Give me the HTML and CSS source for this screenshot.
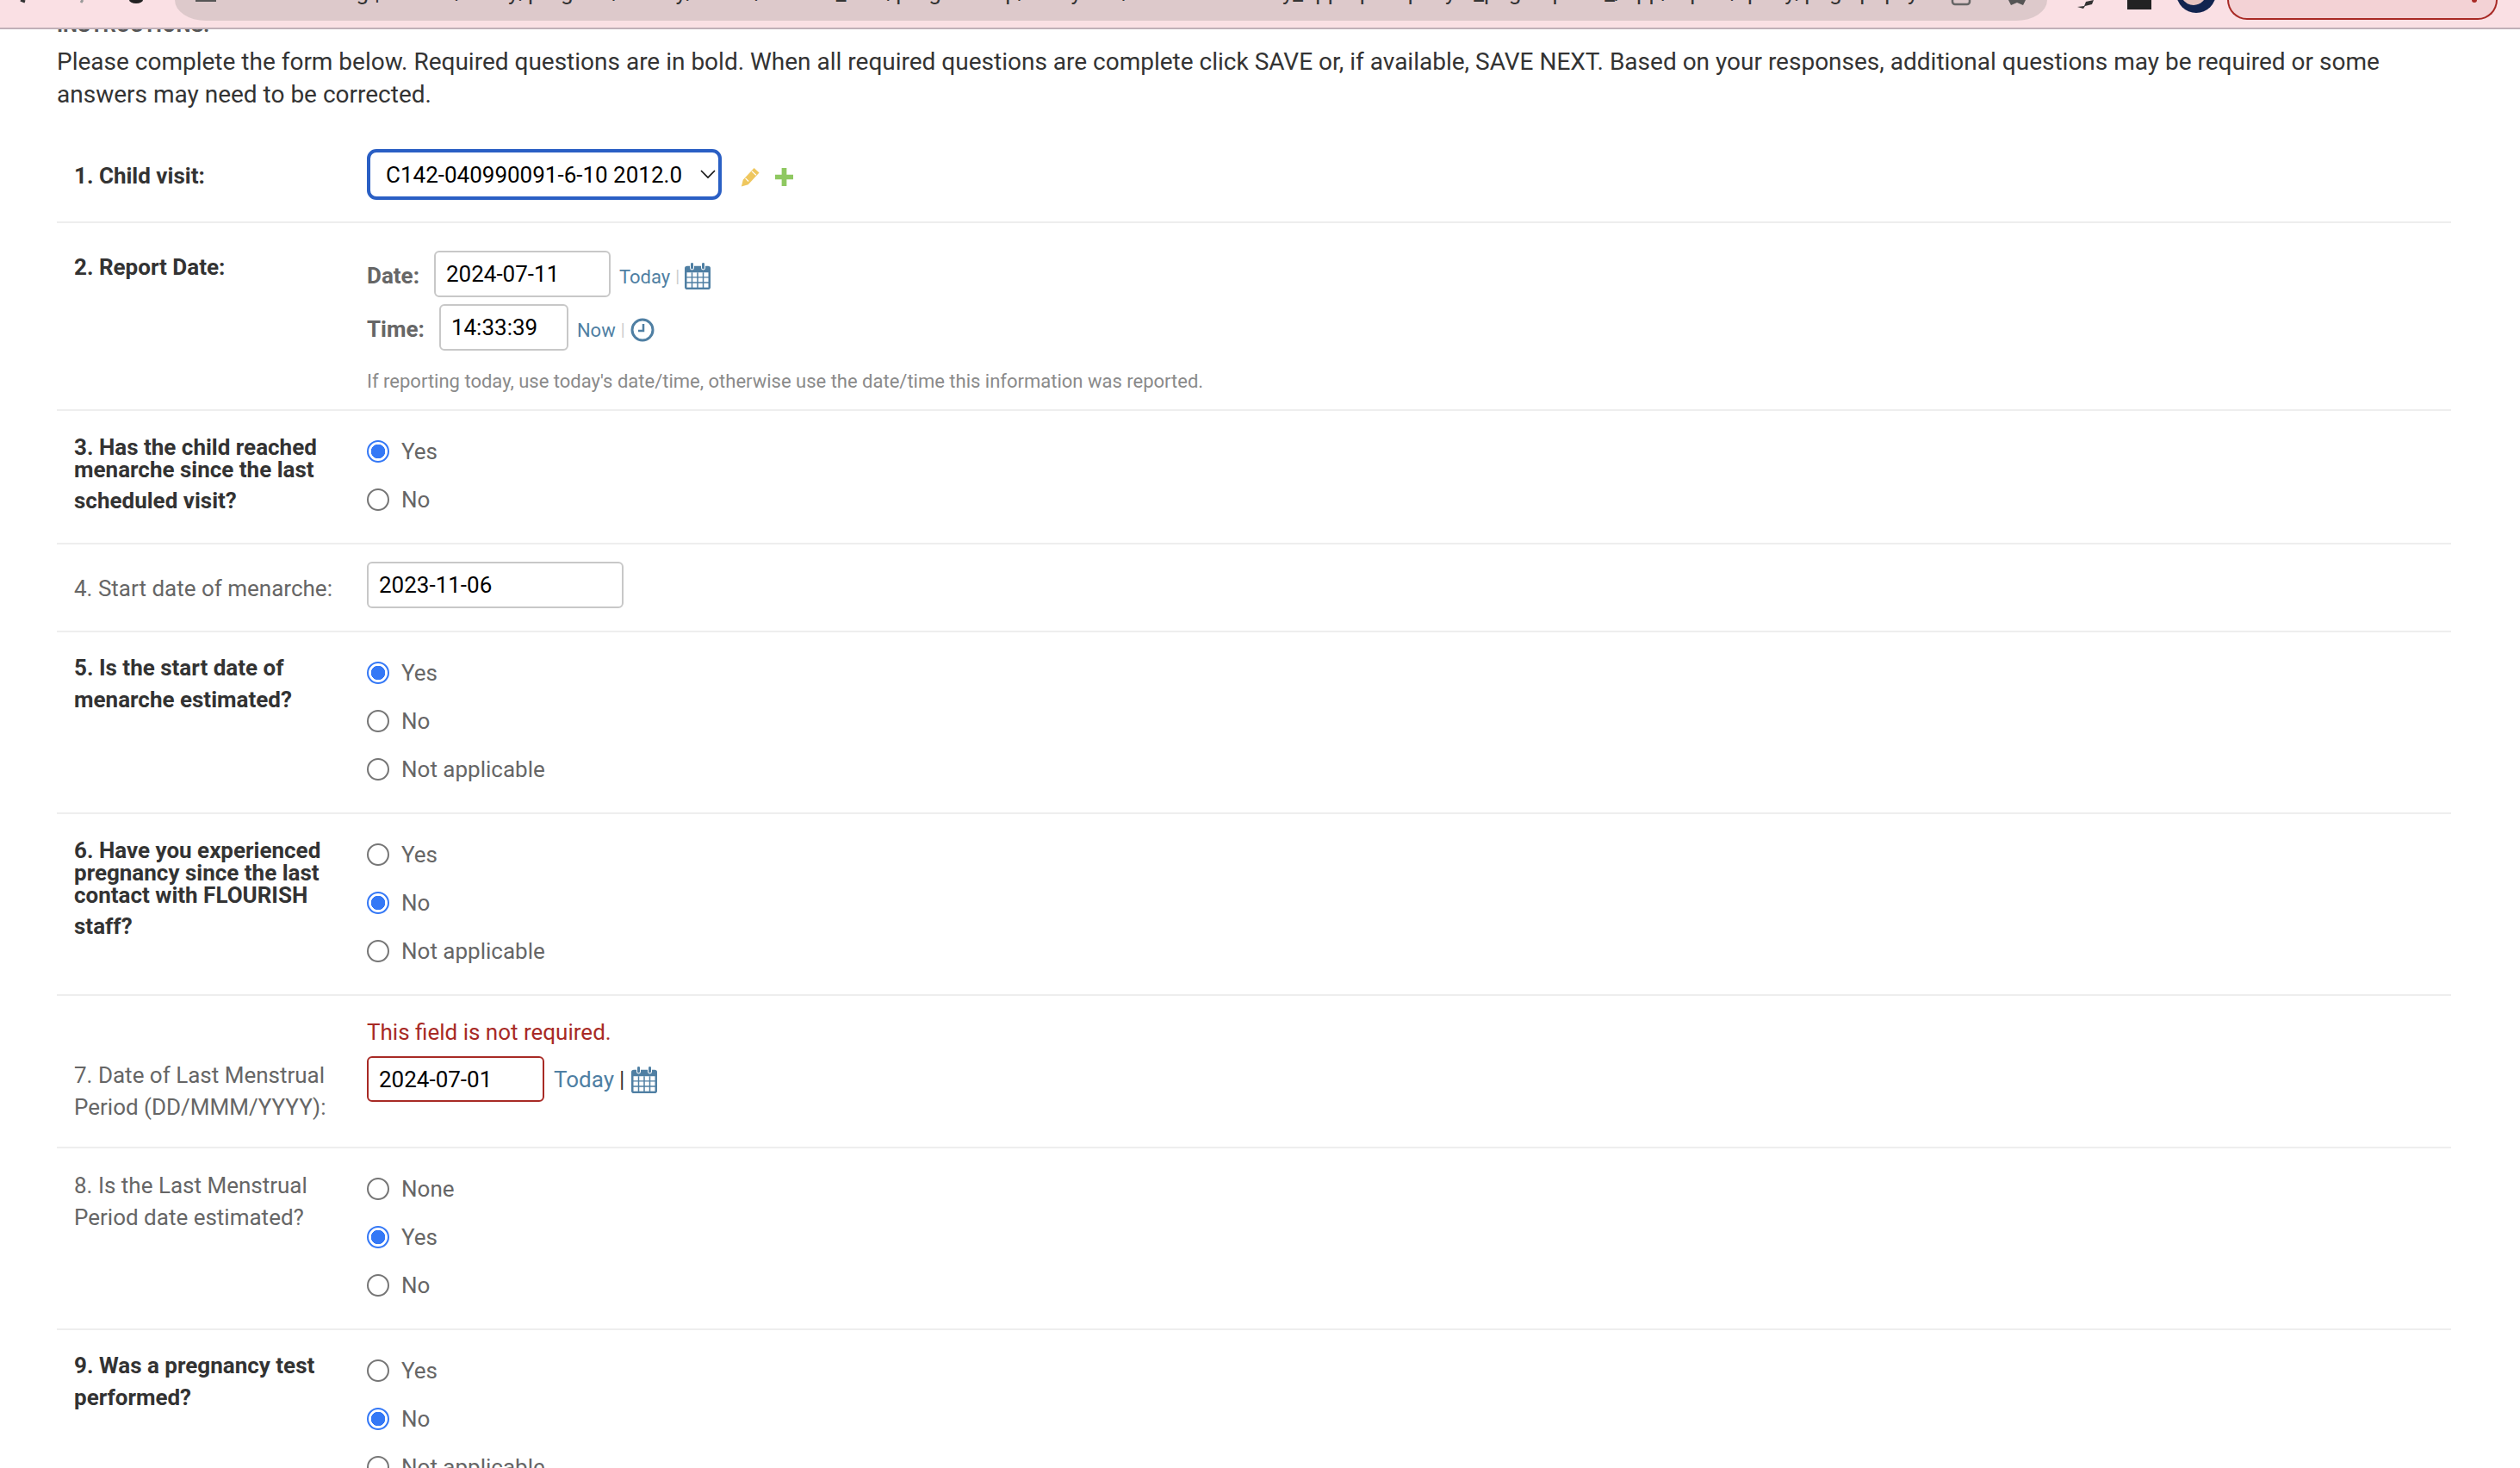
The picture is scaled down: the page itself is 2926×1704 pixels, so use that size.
FILE: index.html
```html
<!DOCTYPE html>
<html lang="en">
<head>
<meta charset="utf-8">
<title>Form</title>
<link rel="stylesheet" href="styles.css">
</head>
<body>
<header class="chrome">
  <div class="nav">
    <svg class="nav-icons" width="180" height="12" viewBox="0 0 180 12"><path d="M24 0l5 2" stroke="#333" stroke-width="3" fill="none"/><path d="M96 0l-2 3" stroke="#999" stroke-width="3" fill="none"/><path d="M150 0a8 4 0 0 0 16 0z" fill="#222"/></svg>
  </div>
  <div class="omnibox">
    <span class="tune"></span>
    <span class="url">flourish.ex.org | clinical/study/program/survey/forms/formsd_visit/programoup/studyvisit/recordformentry_appreportqueryid_pagereports_/app/report/query/page.php?y</span>
    <svg class="omni-icons" width="110" height="12" viewBox="0 0 110 12"><path d="M6 0v2a3 3 0 0 0 3 3h14a3 3 0 0 0 3-3V0" stroke="#666" stroke-width="2.5" fill="none"/><path d="M71 0h20l-3 6-7-3-7 3z" fill="#555"/></svg>
  </div>
  <div class="tools">
    <svg width="24" height="12" viewBox="0 0 24 12"><path d="M2 8l8-1 2-5 9-2-2 5-8 2-2 3z" fill="#333"/></svg>
    <span class="tool-rect"></span>
    <svg class="avatar" width="48" height="16" viewBox="0 0 48 16"><circle cx="24" cy="-8" r="23" fill="#12244f"/><circle cx="21" cy="-9" r="15" fill="#e7c3bf"/></svg>
    <div class="update"><span class="update-dot"></span></div>
  </div>
</header>

<main class="page">
  <h2 class="instr-title">INSTRUCTIONS:</h2>
  <p class="instr">Please complete the form below. Required questions are in bold. When all required questions are complete click SAVE or, if available, SAVE NEXT. Based on your responses, additional questions may be required or some answers may need to be corrected.</p>

  <form class="form">
    <section class="row row-first">
      <div class="q q-req q-center">1. Child visit:</div>
      <div class="a a-inline">
        <div class="select-wrap">
          <select class="select"><option>C142-040990091-6-10 2012.0</option></select>
          <svg class="chev" width="18" height="11" viewBox="0 0 18 11"><path d="M1 1l8 8 8-8" stroke="#111" stroke-width="1.6" fill="none"/></svg>
        </div>
        <svg class="pencil" width="22" height="23" viewBox="0 0 24 25"><path d="M17 1l6.500 6L9.500 22 1 24.500 3 16z" fill="#efc75e"/><path d="M14 5l5.500 5M6 14l4 4" stroke="#fff" stroke-width="1.300"/></svg>
        <svg class="plus" width="21" height="21" viewBox="0 0 22 22"><path d="M8 0h6v8h8v6h-8v8H8v-8H0V8h8z" fill="#8fc861"/></svg>
      </div>
    </section>

    <section class="row row-report">
      <div class="q q-req q-report">2. Report Date:</div>
      <div class="a">
        <div class="dt-line">
          <label class="dt-label">Date:</label>
          <input class="field w-date" value="2024-07-11">
          <a class="link link-sm">Today</a><span class="sep">|</span>
          <svg class="cal cal-sm" width="30" height="32" viewBox="0 0 30 34" preserveAspectRatio="none"><use href="#cal-icon"/></svg>
        </div>
        <div class="dt-line dt-time">
          <label class="dt-label">Time:</label>
          <input class="field w-time" value="14:33:39">
          <a class="link link-sm">Now</a><span class="sep">|</span>
          <svg class="clock" width="28" height="30" viewBox="0 0 28 30"><circle cx="14" cy="15" r="12" fill="none" stroke="#4f7fa3" stroke-width="3"/><path d="M15 8v8H9" fill="none" stroke="#4f7fa3" stroke-width="2.500"/></svg>
        </div>
        <div class="hint">If reporting today, use today's date/time, otherwise use the date/time this information was reported.</div>
      </div>
    </section>

    <section class="row">
      <div class="q q-req"><div class="tight">3. Has the child reached<br>menarche since the last</div><div class="last">scheduled visit?</div></div>
      <div class="a">
        <label class="radio"><input type="radio" name="q3" checked><span>Yes</span></label>
        <label class="radio"><input type="radio" name="q3"><span>No</span></label>
      </div>
    </section>

    <section class="row row-q4">
      <div class="q q-opt q-center q-q4">4. Start date of menarche:</div>
      <div class="a"><input class="field w-wide" value="2023-11-06"></div>
    </section>

    <section class="row">
      <div class="q q-req">5. Is the start date of<br>menarche estimated?</div>
      <div class="a">
        <label class="radio"><input type="radio" name="q5" checked><span>Yes</span></label>
        <label class="radio"><input type="radio" name="q5"><span>No</span></label>
        <label class="radio"><input type="radio" name="q5"><span>Not applicable</span></label>
      </div>
    </section>

    <section class="row">
      <div class="q q-req"><div class="tight">6. Have you experienced<br>pregnancy since the last<br>contact with FLOURISH</div><div class="last">staff?</div></div>
      <div class="a">
        <label class="radio"><input type="radio" name="q6"><span>Yes</span></label>
        <label class="radio"><input type="radio" name="q6" checked><span>No</span></label>
        <label class="radio"><input type="radio" name="q6"><span>Not applicable</span></label>
      </div>
    </section>

    <section class="row row-q7">
      <div class="q q-opt q-q7">7. Date of Last Menstrual<br>Period (DD/MMM/YYYY):</div>
      <div class="a">
        <div class="err">This field is not required.</div>
        <div class="dt-line">
          <input class="field field-err w-err" value="2024-07-01">
          <a class="link">Today</a><span class="sep sep-dark">|</span>
          <svg class="cal" width="30" height="32" viewBox="0 0 30 34" preserveAspectRatio="none"><use href="#cal-icon"/></svg>
        </div>
      </div>
    </section>

    <section class="row">
      <div class="q q-opt">8. Is the Last Menstrual<br>Period date estimated?</div>
      <div class="a">
        <label class="radio"><input type="radio" name="q8"><span>None</span></label>
        <label class="radio"><input type="radio" name="q8" checked><span>Yes</span></label>
        <label class="radio"><input type="radio" name="q8"><span>No</span></label>
      </div>
    </section>

    <section class="row">
      <div class="q q-req">9. Was a pregnancy test<br>performed?</div>
      <div class="a">
        <label class="radio"><input type="radio" name="q9"><span>Yes</span></label>
        <label class="radio"><input type="radio" name="q9" checked><span>No</span></label>
        <label class="radio"><input type="radio" name="q9"><span>Not applicable</span></label>
      </div>
    </section>
  </form>
</main>

<svg class="defs" width="0" height="0">
  <symbol id="cal-icon" viewBox="0 0 30 34">
    <path d="M3 5h24a3 3 0 0 1 3 3v23a3 3 0 0 1-3 3H3a3 3 0 0 1-3-3V8a3 3 0 0 1 3-3z" fill="#4f7fa3"/>
    <path d="M2.500 13h25v18.500h-25z" fill="#fff"/>
    <path d="M8.500 13v19M15 13v19M21.500 13v19M2 19h26M2 25.500h26" stroke="#4f7fa3" stroke-width="1.500"/>
    <rect x="6" y="0" width="5" height="10" rx="2.500" fill="#fff"/><rect x="7" y="1" width="3" height="8" rx="1.500" fill="#4f7fa3"/>
    <rect x="19" y="0" width="5" height="10" rx="2.500" fill="#fff"/><rect x="20" y="1" width="3" height="8" rx="1.500" fill="#4f7fa3"/>
  </symbol>
</svg>
</body>
</html>
```
FILE: styles.css
```css
* { box-sizing: border-box; }
html, body { margin: 0; height: 1704px; overflow: hidden; background: #fff; }
body { font-family: Roboto, "Liberation Sans", sans-serif; font-size: 28px; color: #333; }

.chrome { position: relative; z-index: 2; display: flex; height: 34px; background: #fae0e4; border-bottom: 2px solid #c0b0b8; }
.nav { width: 203px; flex: none; }
.nav-icons { display: block; }
.omnibox { width: 2174px; flex: none; height: 24px; background: #ddc9cb; border-radius: 0 0 36px 36px / 0 0 24px 24px; display: flex; position: relative; overflow: hidden; }
.tune { width: 24px; height: 2px; background: #555; margin-left: 24px; flex: none; }
.url { margin: -24px 0 0 12px; font-size: 26px; line-height: 30px; color: #333; white-space: nowrap; flex: none; }
.omni-icons { position: absolute; right: 6px; top: 0; }
.tools { flex: 1; display: flex; align-items: flex-start; padding-left: 33px; }
.tool-rect { width: 28px; height: 11px; background: #222; margin-left: 36px; flex: none; }
.avatar { margin-left: 28px; flex: none; }
.update { width: 314px; height: 23px; margin-left: 12px; background: #f3d2d5; border: 2px solid #a82a25; border-top: 0; border-radius: 0 0 26px 26px; position: relative; flex: none; }
.update-dot { position: absolute; right: 22px; top: 0; width: 6px; height: 3px; border-radius: 0 0 3px 3px; background: #a82a25; }

.page { padding: 0 80px 0 66px; }
.instr-title { margin: -20px 0 0; font-size: 24px; line-height: 30px; font-weight: 700; color: #555; }
.instr { margin: 9px 0 0; line-height: 38px; color: #333; }

.form { display: block; margin-top: 24px; }
.row { display: grid; grid-template-columns: 340px 1fr; padding: 20px 0 22px 20px; border-bottom: 2px solid #eee; min-width: 0; }
.row-first { padding-bottom: 25px; }
.row-report { padding: 32px 0 17px 20px; }
.row-q4 { padding-bottom: 26px; }
.row-q7 { padding: 24px 0 27px 20px; }

.q { font-size: 26px; line-height: 37px; padding-top: 3px; }
.q-req { font-weight: 700; color: #333; }
.q-opt { font-weight: 400; color: #666; padding-top: 5px; }
.q-center { align-self: center; padding-top: 4px; }
.q-q4 { padding-top: 9px; }
.q-report { padding-top: 1px; }
.q-q7 { padding-top: 50px; }
.tight { line-height: 26px; padding-top: 6px; }
.last { line-height: 37px; margin-top: 5px; }

.a-inline { display: flex; align-items: center; }
.select-wrap { position: relative; width: 412px; height: 59px; flex: none; }
.select { appearance: none; display: block; width: 100%; height: 100%; padding: 0 0 0 18px; font: 400 26px Roboto, sans-serif; color: #000; background: #fff; border: 4px solid #2a5fc4; border-radius: 11px; outline: 0; }
.chev { position: absolute; right: 7px; top: 24px; }
.pencil { margin: 6px 0 0 22px; }
.plus { margin: 6px 0 0 18px; }

.dt-line { display: flex; align-items: center; }
.dt-time { margin-top: 8px; }
.dt-label { font-weight: 700; font-size: 26px; color: #666; margin-right: 17px; padding-top: 4px; }
.field { height: 54px; padding: 0 12px; font: 400 26px Roboto, sans-serif; color: #000; background: #fff; border: 2px solid #c8c8c8; border-radius: 6px; outline: 0; }
.w-date { width: 205px; }
.w-time { width: 150px; }
.w-wide { width: 298px; display: block; }
.w-err { width: 206px; height: 53px; }
.field-err { border-color: #a82a25; }
.link { color: #4f7fa3; margin-left: 11px; font-size: 26px; }
.link-sm { font-size: 22px; margin-left: 10px; padding-top: 6px; }
.sep { color: #ccc; font-size: 20px; margin: 6px 6px 0 6px; }
.sep-dark { color: #333; font-size: 26px; margin: 0 8px 0 6px; }
.cal { display: block; }
.cal-sm { margin-top: 4px; }
.clock { margin-top: 6px; }
.hint { margin-top: 21px; font-size: 22px; line-height: 30px; color: #8a8a8a; }
.err { color: #a82a25; font-size: 26px; line-height: 36px; margin-bottom: 10px; }

.radio { display: flex; align-items: center; height: 56px; font-size: 26px; color: #666; }
.radio:first-child { margin-top: -1px; }
.radio input { appearance: none; flex: none; width: 26px; height: 26px; margin: 0 14px 0 0; border: 2px solid #767676; border-radius: 50%; background: #fff; }
.radio input:checked { border-color: #3478f6; background: radial-gradient(circle, #3478f6 0 8px, #fff 8.500px); }

.defs { position: absolute; }
```
